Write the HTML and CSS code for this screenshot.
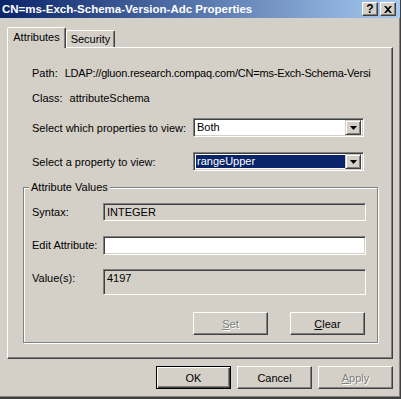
FILE: index.html
```html
<!DOCTYPE html>
<html lang="en">
<head>
    <meta charset="UTF-8">
    <title>CN=ms-Exch-Schema-Version-Adc Properties</title>
    <link rel="stylesheet" href="styles.css">
</head>
<body>
    <div class="window">
        <!-- Barra de titulo -->
        <div class="titlebar">
            <span class="title">CN=ms-Exch-Schema-Version-Adc Properties</span>
            <div class="title-buttons">
                <span class="tbtn help">?</span>
                <span class="tbtn close">
                    <svg width="8" height="7" viewBox="0 0 8 7"><path d="M0 0h2l2 2 2-2h2L5 3.5 8 7H6L4 5 2 7H0l3-3.5z" fill="#000"/></svg>
                </span>
            </div>
        </div>

        <div class="content">
            <div class="tabs">
                <div class="tab active">Attributes</div>
                <div class="tab">Security</div>
            </div>

            <div class="panel">
                <div class="info-row path-row"><span class="info-label">Path:</span>LDAP://gluon.research.compaq.com/CN=ms-Exch-Schema-Versi</div>
                <div class="info-row"><span class="info-label">Class:</span>attributeSchema</div>

                <div class="select-row">
                    <label>Select which properties to view:</label>
                    <div class="combo">
                        <span class="combo-text">Both</span>
                        <span class="combo-arrow"><svg width="7" height="4" viewBox="0 0 7 4"><path d="M0 0h7L3.5 4z" fill="#000"/></svg></span>
                    </div>
                </div>
                <div class="select-row">
                    <label>Select a property to view:</label>
                    <div class="combo selected">
                        <span class="combo-text">rangeUpper</span>
                        <span class="combo-arrow"><svg width="7" height="4" viewBox="0 0 7 4"><path d="M0 0h7L3.5 4z" fill="#000"/></svg></span>
                    </div>
                </div>

                <fieldset class="group">
                    <legend>Attribute Values</legend>
                    <div class="field-row">
                        <span class="field-label">Syntax:</span>
                        <div class="field readonly">INTEGER</div>
                    </div>
                    <div class="field-row">
                        <span class="field-label">Edit Attribute:</span>
                        <div class="field edit"></div>
                    </div>
                    <div class="field-row">
                        <span class="field-label">Value(s):</span>
                        <div class="field readonly values">4197</div>
                    </div>
                    <div class="group-buttons">
                        <button class="btn disabled"><u>S</u>et</button>
                        <button class="btn"><u>C</u>lear</button>
                    </div>
                </fieldset>
            </div>

            <div class="dialog-buttons">
                <button class="btn default">OK</button>
                <button class="btn">Cancel</button>
                <button class="btn disabled"><u>A</u>pply</button>
            </div>
        </div>
    </div>
</body>
</html>
```

FILE: styles.css
```css
* {
    margin: 0;
    padding: 0;
    box-sizing: border-box;
}
body {
    font-family: 'Liberation Sans', Arial, sans-serif;
    font-size: 11px;
    color: #000;
    background-color: #d4d0c8;
    width: 401px;
    height: 399px;
    overflow: hidden;
}
.window {
    width: 401px;
    height: 399px;
    background-color: #d4d0c8;
    border-right: 1px solid #404040;
    border-bottom: 2px solid #404040;
    box-shadow: inset -1px -1px #808080;
    display: flex;
    flex-direction: column;
}
.titlebar {
    height: 18px;
    background: linear-gradient(to right, #0a246a, #a6caf0);
    display: flex;
    align-items: center;
    justify-content: space-between;
    padding: 0 4px 0 2px;
    color: #fff;
}
.title {
    font-weight: bold;
    font-size: 11.5px;
}
.title-buttons {
    display: flex;
    gap: 2px;
}
.tbtn {
    width: 16px;
    height: 14px;
    background-color: #d4d0c8;
    border: 1px solid;
    border-color: #fff #404040 #404040 #fff;
    box-shadow: inset -1px -1px #808080;
    display: flex;
    align-items: center;
    justify-content: center;
    color: #000;
    font-weight: bold;
    font-size: 12px;
    line-height: 11px;
}
.content {
    flex: 1;
    padding: 9px 7px 0 7px;
    display: flex;
    flex-direction: column;
}
.tabs {
    display: flex;
    align-items: flex-end;
    height: 20px;
}
.tab {
    width: 49px;
    height: 17px;
    text-align: center;
    line-height: 16px;
    border: 1px solid;
    border-bottom: none;
    border-color: #fff #404040 transparent #fff;
    box-shadow: inset -1px 0 #808080;
    border-radius: 2px 2px 0 0;
}
.tab.active {
    width: 59px;
    height: 21px;
    line-height: 19px;
    margin-bottom: -1px;
    background-color: #d4d0c8;
    position: relative;
    z-index: 1;
}
.panel {
    height: 312px;
    border: 1px solid;
    border-color: #fff #404040 #404040 #fff;
    box-shadow: inset -1px -1px #808080;
    padding: 19px 14px 0 15px;
    display: flex;
    flex-direction: column;
}
.info-row {
    height: 13px;
    line-height: 13px;
    padding-left: 9px;
    white-space: nowrap;
}
.info-row + .info-row {
    margin-top: 12px;
}
.path-row {
    letter-spacing: -0.2px;
}
.info-label {
    margin-right: 7px;
    letter-spacing: 0;
}
.select-row {
    display: flex;
    align-items: center;
    padding-left: 9px;
    height: 19px;
    margin-top: 13px;
}
.select-row + .select-row {
    margin-top: 15px;
}
.select-row label {
    width: 161px;
}
.combo {
    width: 171px;
    height: 19px;
    display: flex;
    background-color: #fff;
    border: 1px solid;
    border-color: #808080 #fff #fff #808080;
    box-shadow: inset 1px 1px #404040, inset -1px -1px #d4d0c8;
    padding: 2px;
}
.combo-text {
    flex: 1;
    padding-left: 1px;
    line-height: 13px;
}
.combo.selected .combo-text {
    background-color: #0a246a;
    color: #fff;
}
.combo-arrow {
    width: 16px;
    margin-top: -1px;
    margin-bottom: -1px;
    background-color: #d4d0c8;
    border: 1px solid;
    border-color: #d4d0c8 #404040 #404040 #d4d0c8;
    box-shadow: inset 1px 1px #fff, inset -1px -1px #808080;
    display: flex;
    align-items: center;
    justify-content: center;
}
.group {
    margin-top: 10px;
    height: 162px;
    border: 1px solid #808080;
    box-shadow: 1px 1px #fff, inset 1px 1px #fff;
    padding: 9px 11px 0 8px;
    min-width: 0;
}
.group legend {
    margin-left: -3px;
    padding: 0 2px;
    line-height: 13px;
    background-color: #d4d0c8;
}
.field-row {
    display: flex;
    align-items: flex-start;
}
.field-row + .field-row {
    margin-top: 15px;
}
.field-row:nth-of-type(3) {
    margin-top: 14px;
}
.field-label {
    width: 71px;
    line-height: 18px;
}
.field {
    flex: 1;
    height: 18px;
    border: 1px solid;
    border-color: #808080 #fff #fff #808080;
    box-shadow: inset 1px 1px #404040, inset -1px -1px #d4d0c8;
    padding-left: 3px;
    line-height: 16px;
}
.field.readonly {
    background-color: #d4d0c8;
}
.field.edit {
    height: 19px;
    background-color: #fff;
}
.field.values {
    height: 26px;
}
.group-buttons {
    display: flex;
    justify-content: flex-end;
    gap: 22px;
    margin-top: 17px;
    margin-right: 1px;
}
.btn {
    width: 75px;
    height: 23px;
    background-color: #d4d0c8;
    border: 1px solid;
    border-color: #fff #404040 #404040 #fff;
    box-shadow: inset -1px -1px #808080;
    font-family: inherit;
    font-size: 11px;
    color: #000;
}
.btn.default {
    border-color: #000;
    box-shadow: inset 1px 1px #fff, inset -1px -1px #404040, inset -2px -2px #808080;
}
.btn.disabled {
    color: #808080;
    text-shadow: 1px 1px #fff;
}
.dialog-buttons {
    display: flex;
    justify-content: flex-end;
    gap: 6px;
    margin-top: 7px;
}
```
